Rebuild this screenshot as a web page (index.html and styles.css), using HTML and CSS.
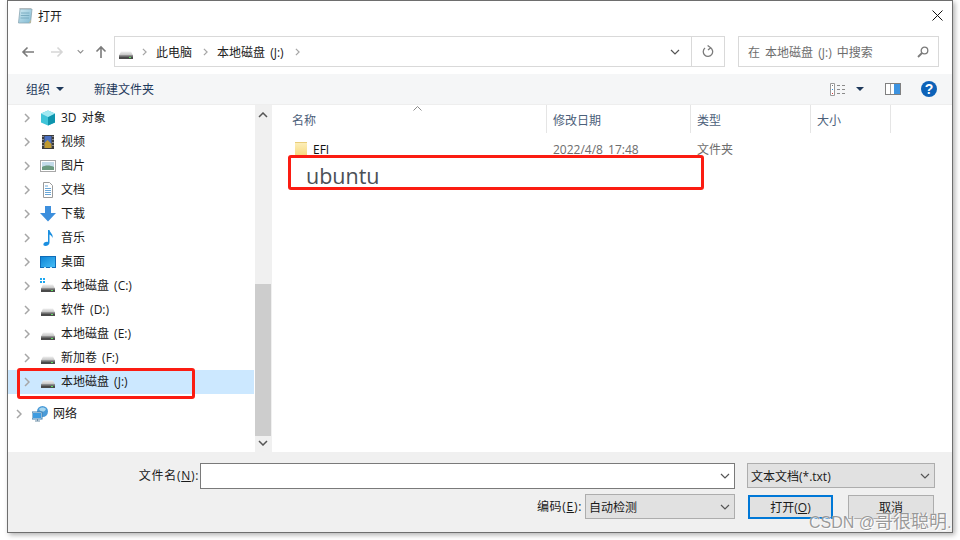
FILE: index.html
```html
<!DOCTYPE html>
<html lang="zh">
<head>
<meta charset="utf-8">
<title>打开</title>
<link rel="stylesheet" href="styles.css">
</head>
<body>
<svg class="defs" width="0" height="0" aria-hidden="true">
  <defs>
    <linearGradient id="noteGrad" x1="0" y1="0" x2="1" y2="1"><stop offset="0" stop-color="#cfe9f2"/><stop offset="1" stop-color="#7fb9d2"/></linearGradient>
    <linearGradient id="driveTop" x1="0" y1="0" x2="0" y2="1"><stop offset="0" stop-color="#f0f0f0"/><stop offset="1" stop-color="#bdbdbd"/></linearGradient>
    <linearGradient id="deskGrad" x1="0" y1="0" x2="1" y2="1"><stop offset="0" stop-color="#0f86d8"/><stop offset="1" stop-color="#46bdf5"/></linearGradient>
    <linearGradient id="folderGrad" x1="0" y1="0" x2="0" y2="1"><stop offset="0" stop-color="#fdf0bd"/><stop offset="1" stop-color="#f6d778"/></linearGradient>
  </defs>
  <symbol id="drive" viewBox="0 0 16 16">
    <path d="M3 6.500h10l2 4H1z" fill="url(#driveTop)"/>
    <path d="M1 10.500h14v3.500H1z" fill="#4a4a4a"/>
    <path d="M1 10.500h14v1H1z" fill="#8f8f8f"/>
    <rect x="11" y="12" width="2" height="1" fill="#5fe05f"/>
  </symbol>
  <symbol id="chev" viewBox="0 0 6 10">
    <path d="M1 1l4 4-4 4" fill="none" stroke="#a6a6a6" stroke-width="1.500"/>
  </symbol>
  <symbol id="down" viewBox="0 0 10 6">
    <path d="M1 1l4 4 4-4" fill="none" stroke="#555" stroke-width="1.200"/>
  </symbol>
</svg>
<main class="window">
  <header class="titlebar">
    <svg class="title-icon" width="16" height="16" viewBox="0 0 16 16"><path d="M3 1h12l-1.500 14H1.500z" fill="url(#noteGrad)" stroke="#8aa6b2" stroke-width=".8"/><path d="M3 1v-.500M5 1v-.500M7 1v-.500M9 1v-.500M11 1v-.500M13 1v-.500" stroke="#555"/><path d="M4 5h8.500M3.800 7.500h8.500M3.500 10h8.500" stroke="#6fa3b9" stroke-width=".8"/><path d="M12 15l2-3.500-.5 3.500z" fill="#c9b98a"/></svg>
    <span class="title-text">打开</span>
    <svg class="close" width="11" height="11" viewBox="0 0 11 11"><path d="M.5.500l10 10M10.500.500l-10 10" stroke="#111" stroke-width="1"/></svg>
  </header>
  <nav class="navbar">
    <svg class="nav-back" width="13" height="12" viewBox="0 0 13 12"><path d="M13 6H2M6.500 1.500 2 6l4.500 4.500" fill="none" stroke="#7b7b7b" stroke-width="1.600"/></svg>
    <svg class="nav-fwd" width="13" height="12" viewBox="0 0 13 12"><path d="M0 6h11M6.500 1.500 11 6l-4.500 4.500" fill="none" stroke="#d6d6d6" stroke-width="1.600"/></svg>
    <svg class="nav-hist" width="7" height="5" viewBox="0 0 10 6"><path d="M1 1l4 4 4-4" fill="none" stroke="#8c8c8c" stroke-width="1.500"/></svg>
    <svg class="nav-up" width="12" height="13" viewBox="0 0 12 13"><path d="M6 13V2M1.500 6.500 6 2l4.500 4.500" fill="none" stroke="#7b7b7b" stroke-width="1.600"/></svg>
    <div class="address">
      <svg class="addr-drive" width="16" height="16"><use href="#drive"/></svg>
      <svg class="crumb-chev" width="5" height="8"><use href="#chev"/></svg>
      <span class="crumb">此电脑</span>
      <svg class="crumb-chev" width="5" height="8"><use href="#chev"/></svg>
      <span class="crumb">本地磁盘 (J:)</span>
      <svg class="crumb-chev" width="5" height="8"><use href="#chev"/></svg>
      <span class="grow"></span>
      <svg class="addr-down" width="10" height="6"><use href="#down"/></svg>
      <span class="addr-refresh">
        <svg width="12" height="13" viewBox="0 0 12 13"><path d="M8.500 2.700A4.700 4.700 0 1 1 3 3M5.600.500 8.700 2.700 6 5" fill="none" stroke="#7b7b7b" stroke-width="1.300"/></svg>
      </span>
    </div>
    <div class="search">
      <span class="search-text">在 本地磁盘 (J:) 中搜索</span>
      <svg width="12" height="12" viewBox="0 0 12 12"><circle cx="7.500" cy="4.500" r="3.300" fill="none" stroke="#7b7b7b" stroke-width="1.300"/><path d="M5 7 1 11" stroke="#7b7b7b" stroke-width="1.800"/></svg>
    </div>
  </nav>
  <div class="toolbar">
    <span class="tool">组织</span>
    <i class="caret organize-caret"></i>
    <span class="tool new-folder">新建文件夹</span>
    <span class="grow"></span>
    <svg class="view-icon" width="16" height="13" viewBox="0 0 16 13"><path d="M.5.500h4v12h-4z" fill="#fff" stroke="#9a9a9a"/><rect x="2" y="2" width="1" height="1" fill="#777"/><rect x="2" y="6" width="1" height="1" fill="#2d8fdc"/><rect x="2" y="10" width="1" height="1" fill="#d43535"/><path d="M7 2.500h3M12 2.500h3M7 6.500h3M12 6.500h3M7 10.500h3M12 10.500h3" stroke="#8a8a8a"/></svg>
    <i class="caret view-caret"></i>
    <svg class="pane-icon" width="16" height="12" viewBox="0 0 16 12"><rect x=".5" y=".5" width="15" height="11" fill="#fff" stroke="#808080"/><rect x="9" y="1" width="6" height="10" fill="#3d93e0"/><rect x="5" y="1" width="1" height="10" fill="#a0a0a0"/></svg>
    <svg class="help-icon" width="16" height="16" viewBox="0 0 16 16"><circle cx="8" cy="8" r="8" fill="#0d62b8"/><text x="8" y="13" class="help-mark" text-anchor="middle">?</text></svg>
  </div>
  <div class="main">
    <aside class="tree">
      <ul class="tree-list">
        <li class="tree-row"><svg class="row-chev" width="6" height="10"><use href="#chev"/></svg>
          <svg class="row-icon" width="16" height="16" viewBox="0 0 16 16"><path d="M8 .5 15 3.500v9L8 15.500 1 12.500v-9z" fill="#3fc4d8"/><path d="M8 7 15 3.500v9L8 15.500z" fill="#0e94ad"/><path d="M8 .5 15 3.500 8 7 1 3.500z" fill="#a2e9f2"/></svg>
          <span>3D 对象</span></li>
        <li class="tree-row"><svg class="row-chev" width="6" height="10"><use href="#chev"/></svg>
          <svg class="row-icon" width="16" height="16" viewBox="0 0 16 16"><rect x="2" y="1" width="12" height="14" fill="#3c3c3c"/><rect x="4.500" y="2" width="7" height="12" fill="#4a6fc0"/><path d="M4.500 9l3-3 4 4v4h-7z" fill="#c19a2e"/><path d="M3 2v1M3 5v1M3 8v1M3 11v1M13 2v1M13 5v1M13 8v1M13 11v1" stroke="#ddd"/></svg>
          <span>视频</span></li>
        <li class="tree-row"><svg class="row-chev" width="6" height="10"><use href="#chev"/></svg>
          <svg class="row-icon" width="16" height="16" viewBox="0 0 16 16"><rect x=".5" y="2.500" width="15" height="11" fill="#fff" stroke="#a8a8a8"/><rect x="2" y="4" width="12" height="8" fill="#c3dbe9"/><path d="M2 9c3-2 8-2 12 0v3H2z" fill="#6b9a80"/></svg>
          <span>图片</span></li>
        <li class="tree-row"><svg class="row-chev" width="6" height="10"><use href="#chev"/></svg>
          <svg class="row-icon" width="16" height="16" viewBox="0 0 16 16"><path d="M3.500.5h6l3 3v12h-9z" fill="#fff" stroke="#9a9a9a"/><path d="M5 4h3M5 6.500h6M5 8.500h6M5 10.500h6M5 12.500h6" stroke="#6aa6d6"/></svg>
          <span>文档</span></li>
        <li class="tree-row"><svg class="row-chev" width="6" height="10"><use href="#chev"/></svg>
          <svg class="row-icon" width="16" height="16" viewBox="0 0 16 16"><path d="M5 0h6v7h5l-8 8.500L0 7h5z" fill="#3d8fdd"/></svg>
          <span>下载</span></li>
        <li class="tree-row"><svg class="row-chev" width="6" height="10"><use href="#chev"/></svg>
          <svg class="row-icon" width="16" height="16" viewBox="0 0 16 16"><path d="M8 0h1.500c.5 3 4 4 3 8-.5-2-2-3-3-3.500V12.500c0 2-2 3.500-4 3.500-1.500 0-2.500-1-2-2.300.5-1.500 3-2.500 4.500-1.800z" fill="#1b8fe0"/></svg>
          <span>音乐</span></li>
        <li class="tree-row"><svg class="row-chev" width="6" height="10"><use href="#chev"/></svg>
          <svg class="row-icon" width="16" height="16" viewBox="0 0 16 16"><rect y="2" width="16" height="12" fill="#0f6cb8"/><rect x="1" y="3" width="14" height="10" fill="url(#deskGrad)"/><rect x="4" y="13" width="2" height="1" fill="#bfe6fa"/><rect x="10" y="13" width="2" height="1" fill="#bfe6fa"/></svg>
          <span>桌面</span></li>
        <li class="tree-row"><svg class="row-chev" width="6" height="10"><use href="#chev"/></svg>
          <svg class="row-icon" width="16" height="16" viewBox="0 0 16 16"><use href="#drive"/><path d="M0 0h2v2H0zM3 0h2v2H3zM0 3h2v2H0zM3 3h2v2H3z" fill="#1ea7f0"/></svg>
          <span>本地磁盘 (C:)</span></li>
        <li class="tree-row"><svg class="row-chev" width="6" height="10"><use href="#chev"/></svg>
          <svg class="row-icon" width="16" height="16"><use href="#drive"/></svg>
          <span>软件 (D:)</span></li>
        <li class="tree-row"><svg class="row-chev" width="6" height="10"><use href="#chev"/></svg>
          <svg class="row-icon" width="16" height="16"><use href="#drive"/></svg>
          <span>本地磁盘 (E:)</span></li>
        <li class="tree-row"><svg class="row-chev" width="6" height="10"><use href="#chev"/></svg>
          <svg class="row-icon" width="16" height="16"><use href="#drive"/></svg>
          <span>新加卷 (F:)</span></li>
        <li class="tree-row selected"><svg class="row-chev" width="6" height="10"><use href="#chev"/></svg>
          <svg class="row-icon" width="16" height="16"><use href="#drive"/></svg>
          <span>本地磁盘 (J:)</span></li>
        <li class="tree-row network"><svg class="row-chev" width="6" height="10"><use href="#chev"/></svg>
          <svg class="row-icon" width="16" height="16" viewBox="0 0 16 16"><circle cx="10.500" cy="5.500" r="5.500" fill="#4a9bd8"/><path d="M7 3c2-2 5-2 7 0-1 3-5 4-7 0z" fill="#a8d6ee"/><rect y="6" width="10" height="7" fill="#e8f2f8" stroke="#3f7fb0"/><rect x="1" y="7" width="8" height="5" fill="#3d9be0"/><path d="M3 15h5M5.500 13v2" stroke="#6a8da6"/></svg>
          <span>网络</span></li>
      </ul>
      <div class="scrollbar">
        <svg class="sb-up" width="10" height="6" viewBox="0 0 10 6"><path d="M1 5l4-4 4 4" fill="none" stroke="#555" stroke-width="1.500"/></svg>
        <span class="sb-track"><span class="sb-thumb"></span></span>
        <svg class="sb-down" width="10" height="6" viewBox="0 0 10 6"><path d="M1 1l4 4 4-4" fill="none" stroke="#555" stroke-width="1.500"/></svg>
      </div>
    </aside>
    <section class="files">
      <div class="file-head">
        <span class="col col-name">名称</span>
        <span class="col col-date">修改日期</span>
        <span class="col col-type">类型</span>
        <span class="col col-size">大小</span>
      </div>
      <div class="file-row">
        <span class="cell-name">
          <svg width="12" height="16" viewBox="0 0 12 16"><path d="M0 1h12v15H0z" fill="url(#folderGrad)"/><path d="M0 1h12v1H0z" fill="#e9cd7a"/></svg>
          <span class="file-name">EFI</span>
        </span>
        <span class="cell-date">2022/4/8 17:48</span>
        <span class="cell-type">文件夹</span>
      </div>
    </section>
    <svg class="sort-mark" width="9" height="5" viewBox="0 0 9 5"><path d="M.5 4.500l4-4 4 4" fill="none" stroke="#8a8a8a"/></svg>
    <div class="callout callout-file">ubuntu</div>
    <div class="callout callout-tree"></div>
  </div>
  <footer class="bottom">
    <div class="bottom-row first-row">
      <label class="field-label">文件名(<u>N</u>):</label>
      <div class="name-input"><svg width="10" height="6"><use href="#down"/></svg></div>
      <div class="select type-select"><span>文本文档(*.txt)</span><svg width="10" height="6"><use href="#down"/></svg></div>
    </div>
    <div class="bottom-row second-row">
      <label class="field-label encode-label">编码(<u>E</u>):</label>
      <div class="select encode-select"><span>自动检测</span><svg width="10" height="6"><use href="#down"/></svg></div>
      <button class="btn primary">打开(<u>O</u>)</button>
      <button class="btn">取消</button>
    </div>
  </footer>
</main>
<div class="watermark">CSDN @<span class="watermark-cjk">哥很聪明</span>.</div>
</body>
</html>
```
FILE: styles.css
```css
* { box-sizing: border-box; }
html, body { margin: 0; padding: 0; }
body {
  width: 960px;
  height: 540px;
  overflow: hidden;
  background: #fff;
  font-family: "Open Sans", "Noto Sans CJK SC", sans-serif;
  font-size: 12px;
  word-spacing: 2px;
  color: #1a1a1a;
  position: relative;
}
.defs { position: absolute; }
.window {
  margin-left: 7px;
  width: 946px;
  height: 533px;
  border: 1px solid #6e6e6e;
  background: #fff;
  display: flex;
  flex-direction: column;
  box-shadow: 2px 2px 5px rgba(0,0,0,.3);
}
.grow { flex: 1; }

.titlebar {
  height: 29px;
  flex: none;
  display: flex;
  align-items: center;
  padding: 0 9px;
}
.title-icon { margin-right: 5px; }
.title-text { flex: 1; }

.navbar {
  height: 44px;
  flex: none;
  display: flex;
  align-items: center;
  padding: 6px 12px 7px 13px;
}
.nav-back { margin-right: 17px; }
.nav-fwd { margin-right: 13px; }
.nav-hist { margin-right: 11px; }
.nav-up { margin-right: 7px; }
.address {
  width: 611px;
  height: 31px;
  border: 1px solid #d9d9d9;
  display: flex;
  align-items: center;
  padding-left: 3px;
}
.addr-drive { margin-right: 8px; margin-top: 2px; }
.crumb-chev { margin-right: 9px; }
.crumb { margin-right: 11px; color: #222; white-space: nowrap; }
.addr-down { margin-right: 11px; }
.addr-refresh {
  width: 33px;
  height: 100%;
  border-left: 1px solid #d9d9d9;
  display: flex;
  align-items: center;
  justify-content: center;
}
.search {
  width: 201px;
  height: 31px;
  margin-left: 13px;
  border: 1px solid #d9d9d9;
  display: flex;
  align-items: center;
  justify-content: space-between;
  padding: 0 9px;
  color: #6d6d6d;
}

.toolbar {
  height: 31px;
  flex: none;
  background: #f5f6f7;
  display: flex;
  align-items: center;
  padding: 0 15px 0 18px;
  border-bottom: 1px solid #eeeeee;
  color: #1e395b;
}
.tool { white-space: nowrap; }
.caret {
  width: 0;
  height: 0;
  border-left: 4px solid transparent;
  border-right: 4px solid transparent;
  border-top: 4px solid #1e395b;
}
.organize-caret { margin-left: 6px; }
.new-folder { margin-left: 30px; }
.view-icon { margin-right: 10px; }
.view-caret { margin-right: 21px; }
.pane-icon { margin-right: 20px; }
.help-mark { font: bold 14px "Liberation Sans", sans-serif; fill: #fff; }

.main {
  flex: 1;
  min-height: 0;
  display: flex;
  position: relative;
}
.tree {
  width: 264px;
  flex: none;
  display: flex;
  border-right: 1px solid #f0f0f0;
}
.tree-list {
  flex: 1;
  list-style: none;
  margin: 0;
  padding: 1px 0 0;
}
.tree-row {
  height: 24px;
  display: flex;
  align-items: center;
  padding-left: 16px;
  white-space: nowrap;
}
.tree-row span { margin-bottom: 2px; }
.tree-row.selected { background: #cce8ff; }
.row-chev { margin-right: 10px; flex: none; }
.row-icon { margin-right: 5px; flex: none; }
.tree-row.network { margin-top: 8px; padding-left: 8px; }
.scrollbar {
  width: 16px;
  margin-left: 1px;
  flex: none;
  background: #f0f0f0;
  display: flex;
  flex-direction: column;
  align-items: center;
}
.sb-up { margin-top: 7px; flex: none; }
.sb-down { margin-bottom: 6px; flex: none; }
.sb-track {
  flex: 1;
  align-self: stretch;
  display: flex;
  flex-direction: column;
  justify-content: flex-end;
  padding: 7px 0 4px;
}
.sb-thumb { height: 152px; background: #cdcdcd; }

.files {
  flex: 1;
  min-width: 0;
}
.file-head {
  height: 28px;
  display: flex;
  color: #4c607a;
}
.col {
  display: flex;
  align-items: center;
  border-right: 1px solid #e5e5e5;
  padding: 2px 0 0 6px;
}
.col-name { width: 275px; padding-left: 20px; }
.col-date { width: 144px; }
.col-type { width: 120px; }
.col-size { width: 80px; }
.file-row {
  display: flex;
  align-items: center;
  height: 22px;
  margin-top: 5px;
}
.cell-name {
  width: 275px;
  padding-left: 23px;
  display: flex;
  align-items: center;
}
.file-name { margin-left: 6px; color: #111; }
.cell-date { width: 144px; padding-left: 6px; color: #6d6d6d; }
.cell-type { padding-left: 6px; color: #6d6d6d; }

.sort-mark { position: absolute; left: 405px; top: 1px; }
.callout {
  position: absolute;
  border: 3px solid #fb1c12;
  border-radius: 3px;
}
.callout-file {
  left: 280px;
  top: 50px;
  width: 416px;
  height: 35px;
  background: #fff;
  padding-left: 15px;
  font-size: 21.500px;
  line-height: 35px;
  color: #4b4f56;
  font-family: "Open Sans", sans-serif;
}
.callout-tree {
  left: 9px;
  top: 263px;
  width: 178px;
  height: 31px;
}

.bottom {
  height: 80px;
  flex: none;
  background: #f0f0f0;
  padding: 11px 17px 0 0;
}
.bottom-row { display: flex; align-items: flex-start; justify-content: flex-end; }
.first-row { height: 31px; }
.second-row { margin-right: 1px; }
.field-label { white-space: nowrap; margin-right: 1px; line-height: 26px; letter-spacing: .7px; }
.name-input {
  width: 535px;
  height: 26px;
  background: #fff;
  border: 1px solid #7a7a7a;
  display: flex;
  align-items: center;
  justify-content: flex-end;
  padding-right: 4px;
  margin-right: 12px;
}
.select {
  height: 25px;
  background: #e1e1e1;
  border: 1px solid #adadad;
  display: flex;
  align-items: center;
  justify-content: space-between;
  padding: 0 4px 0 3px;
}
.type-select { width: 188px; }
.encode-select { width: 150px; margin-right: 13px; }
.encode-label { margin-right: 3px; line-height: 25px; }
.btn {
  font: inherit;
  color: inherit;
  word-spacing: normal;
  width: 86px;
  height: 24px;
  margin-top: 1px;
  padding: 0;
  background: #e1e1e1;
  border: 1px solid #adadad;
}
.btn.primary { width: 85px; border: 2px solid #0078d7; margin-right: 15px; }

.watermark {
  position: absolute;
  left: 809px;
  top: 511px;
  font-size: 16px;
  line-height: 22px;
  word-spacing: 0;
  color: rgba(120,120,120,.75);
  text-shadow: 0 0 1px #fff, 1px 1px 0 rgba(255,255,255,.9);
  white-space: nowrap;
  font-family: "Liberation Sans", "Noto Sans CJK SC", sans-serif;
}
.watermark-cjk { font-size: 18px; }
```
